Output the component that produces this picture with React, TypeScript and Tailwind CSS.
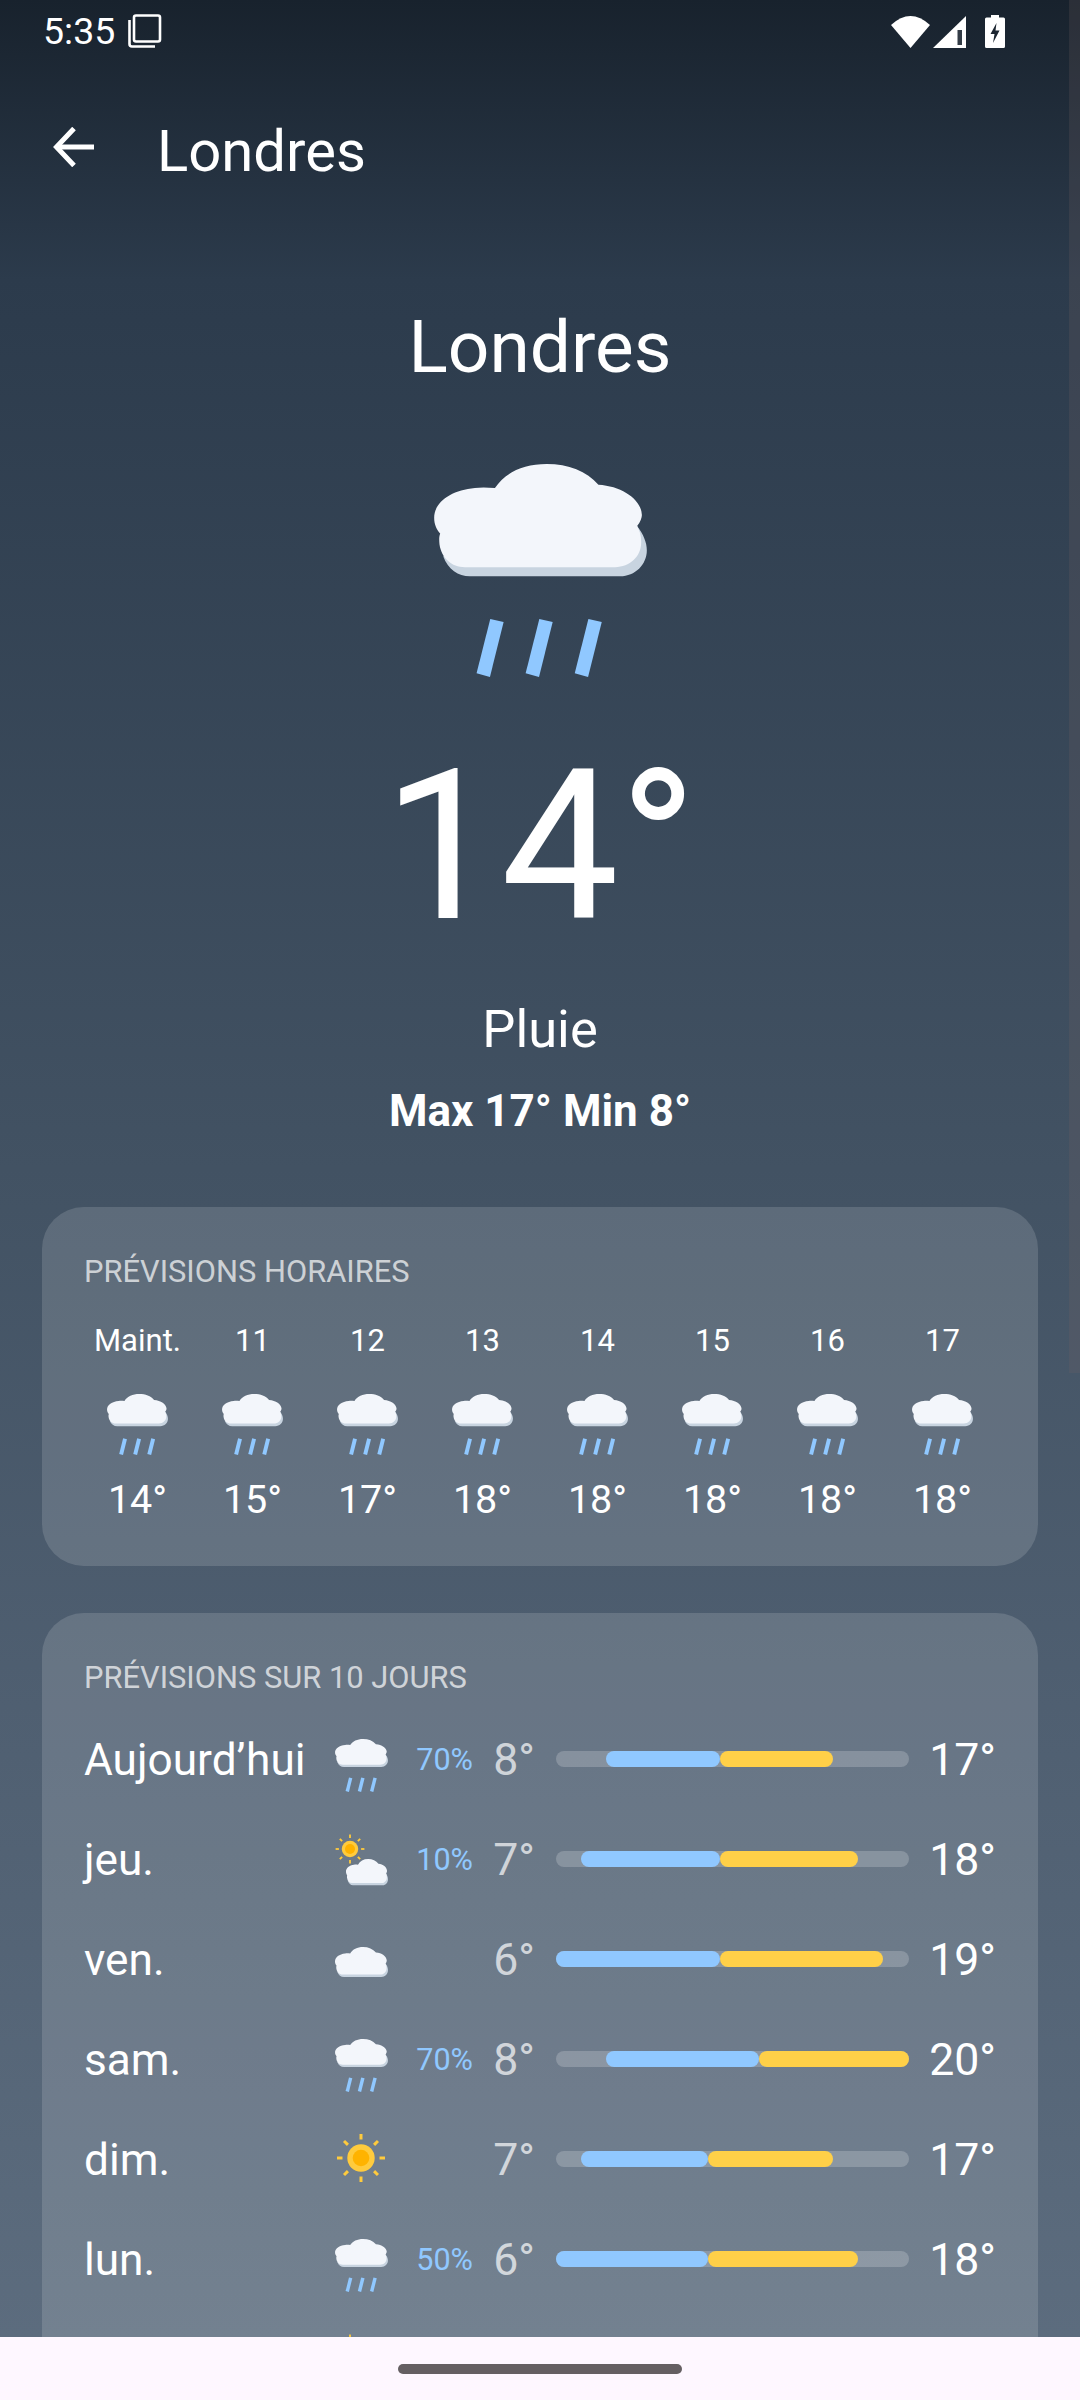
const days = [
  { day: "Aujourd’hui", icon: "rain", pct: "70%", low: "8°", high: "17°", start: 50, blue: 114, yellow: 113 },
  { day: "jeu.", icon: "partly", pct: "10%", low: "7°", high: "18°", start: 25, blue: 139, yellow: 138 },
  { day: "ven.", icon: "cloud", pct: "", low: "6°", high: "19°", start: 0, blue: 164, yellow: 163 },
  { day: "sam.", icon: "rain", pct: "70%", low: "8°", high: "20°", start: 50, blue: 153, yellow: 150 },
  { day: "dim.", icon: "sun", pct: "", low: "7°", high: "17°", start: 25, blue: 127, yellow: 125 },
  { day: "lun.", icon: "rain", pct: "50%", low: "6°", high: "18°", start: 0, blue: 152, yellow: 150 },
]

const hours = [
  { label: "Maint.", temp: "14°" },
  { label: "11", temp: "15°" },
  { label: "12", temp: "17°" },
  { label: "13", temp: "18°" },
  { label: "14", temp: "18°" },
  { label: "15", temp: "18°" },
  { label: "16", temp: "18°" },
  { label: "17", temp: "18°" },
]

/* ---------------- WEATHER ICONS ---------------- */

function CloudPaths() {
  return (
    <>
      <path
        d="M190 380 C205 420 235 440 270 440 H720 C765 440 800 405 800 362 C800 340 790 315 771 290 L600 340 Z"
        fill="#c8d4e0"
      />
      <path
        d="M255 413 H705 C750 413 785 380 783 335 C783 318 778 303 771 290 C782 275 786 262 785 255 C783 210 725 170 655 166 C620 125 565 104 500 104 C430 104 375 130 345 176 C320 174 300 174 285 176 C215 182 163 218 163 265 C163 285 170 300 181 312 C177 322 178 335 179 345 C185 385 215 413 255 413 Z"
        fill="#f3f6fb"
      />
    </>
  )
}

function RainIcon({ className }: { className: string }) {
  return (
    <svg viewBox="163 104 637 638" className={className}>
      <CloudPaths />
      <path d="M331 568 L371 577 L330 742 L290 731 Z" fill="#90c8ff" />
      <path d="M478 568 L518 577 L477 742 L437 731 Z" fill="#90c8ff" />
      <path d="M625 568 L665 577 L624 742 L584 731 Z" fill="#90c8ff" />
    </svg>
  )
}

function SunShape() {
  const rays = [0, 45, 90, 135, 180, 225, 270, 315]
  return (
    <>
      {rays.map((r) => (
        <line key={r} x1="0" y1="-18.5" x2="0" y2="-24" stroke="#ffcb3d" strokeWidth="3" transform={`rotate(${r})`} />
      ))}
      <circle r="13.7" fill="#ffcb3d" />
      <circle r="8.3" fill="#ffb300" />
    </>
  )
}

function DayIcon({ icon }: { icon: string }) {
  if (icon === "rain") return <RainIcon className="w-[53px] h-[53px] mt-[15px]" />
  if (icon === "cloud") {
    return (
      <svg viewBox="163 104 637 336" preserveAspectRatio="none" className="w-[53px] h-[30px] mt-[23px]">
        <CloudPaths />
      </svg>
    )
  }
  if (icon === "sun") {
    return (
      <svg viewBox="-25 -25 50 50" className="w-[50px] h-[50px] mt-[9px]">
        <SunShape />
      </svg>
    )
  }
  return (
    <svg viewBox="0 0 60 70" className="w-[60px] h-[70px]">
      <g transform="translate(19 25) scale(0.6)">
        <SunShape />
      </g>
      <g transform="translate(4.2 26.9) scale(0.066 0.078)">
        <CloudPaths />
      </g>
    </svg>
  )
}

/* ---------------- STATUS BAR ---------------- */

function StatusBar() {
  return (
    <div className="h-[63px] flex items-center pl-[43px] pr-[75px] text-white">
      <span className="text-[37.5px] leading-none">5:35</span>
      <svg viewBox="0 0 34 34" className="w-[34px] h-[34px] ml-[13px] mb-[1px]" fill="none" stroke="white" strokeWidth="2.6">
        <rect x="6" y="1.5" width="26" height="26" rx="2" />
        <path d="M1.5 6 V30 Q1.5 32.5 4 32.5 H27" />
      </svg>
      <div className="ml-auto flex items-center">
        <svg viewBox="0 0 39 32" className="w-[39px] h-[32px]">
          <path d="M0 9 Q19.5 -9 39 9 L19.5 32 Z" fill="white" />
        </svg>
        <svg viewBox="0 0 33 32" className="w-[33px] h-[32px] ml-[3px]">
          <path d="M33 0 V32 H0 Z" fill="white" />
          <rect x="24.5" y="14" width="4.5" height="15" fill="#333c46" />
        </svg>
        <svg viewBox="0 0 20 33" className="w-[20px] h-[33px] ml-[19px]">
          <path d="M6 0 H14 V2.5 H18.5 Q20 2.5 20 4 V31.5 Q20 33 18.5 33 H1.5 Q0 33 0 31.5 V4 Q0 2.5 1.5 2.5 H6 Z" fill="white" />
          <path d="M11.5 8 L5.5 19 H9.5 L8 28 L14.5 15.5 H10.5 Z" fill="#1b2530" />
        </svg>
      </div>
    </div>
  )
}

/* ---------------- FORECAST CARDS ---------------- */

function HourlyCard() {
  return (
    <section className="mx-[42px] h-[359px] rounded-[42px] bg-white/[.14] pt-[41px]">
      <h2 className="pl-[42px] text-[30.85px] leading-[48px] text-white/70">PRÉVISIONS HORAIRES</h2>
      <div className="flex pl-[38px] mt-[25px]">
        {hours.map((h, i) => (
          <div key={i} className="w-[115px] shrink-0 flex flex-col items-center text-white">
            <span className="text-[31px] leading-[40px]">{h.label}</span>
            <RainIcon className="w-[61px] h-[61px] mt-[33px]" />
            <span className="text-[39.5px] leading-[44px] mt-[23px]">{h.temp}</span>
          </div>
        ))}
      </div>
    </section>
  )
}

function DayRow({ d }: { d: (typeof days)[number] }) {
  return (
    <div className="h-[100px] flex items-center pl-[42px]">
      <span className="w-[247px] mt-[2px] text-[44.2px] leading-none text-white">{d.day}</span>
      <div className="w-[60px] h-[70px] flex justify-center items-start">
        <DayIcon icon={d.icon} />
      </div>
      <span className="w-[82px] mt-[2px] text-right text-[30.6px] leading-none text-[#90c8ff]">{d.pct}</span>
      <span className="w-[62px] mt-[2px] text-right text-[44.6px] leading-none text-white/70">{d.low}</span>
      <div className="ml-[21px] w-[353px] h-[16px] rounded-full bg-white/20 flex">
        <div className="shrink-0" style={{ width: d.start }} />
        <div className="h-full rounded-full bg-[#90c8ff]" style={{ width: d.blue }} />
        <div className="h-full rounded-full bg-[#ffd048]" style={{ width: d.yellow }} />
      </div>
      <span className="w-[87px] mt-[2px] text-right text-[44.6px] leading-none text-white">{d.high}</span>
    </div>
  )
}

function DailyCard() {
  return (
    <section className="mx-[42px] mt-[47px] rounded-t-[42px] bg-white/[.14] pt-[41px] pb-[60px]">
      <h2 className="pl-[42px] text-[30.85px] leading-[48px] text-white/70">PRÉVISIONS SUR 10 JOURS</h2>
      <div className="mt-[7px]">
        {days.map((d) => (
          <DayRow key={d.day} d={d} />
        ))}
        {/* next row is cut off by the nav bar, only the sun ray shows */}
        <div className="h-[100px] flex items-center pl-[289px]">
          <div className="w-[60px] h-[70px]">
            <DayIcon icon="partly" />
          </div>
        </div>
      </div>
    </section>
  )
}

export default function App() {
  return (
    <div className="relative w-[1080px] h-[2400px] flex flex-col overflow-hidden font-['Roboto',sans-serif]">
      <div className="flex-1 min-h-0 overflow-hidden bg-[linear-gradient(180deg,#18222d_0%,#2c3b4c_12%,#425263_50%,#4f5f71_73%,#5c6c7e_100%)]">
        <StatusBar />

        {/* APP BAR */}
        <div className="h-[170px] flex items-center pl-[53px] text-white">
          <svg viewBox="0 0 41 40" className="w-[41px] h-[40px] mb-[2px]" fill="none" stroke="white" strokeWidth="5">
            <path d="M41 20 H4" />
            <path d="M21 1.5 L3.5 20 L21 38.5" />
          </svg>
          <span className="ml-[63px] mt-[5px] text-[58px] leading-none">Londres</span>
        </div>

        {/* HERO */}
        <div className="flex flex-col items-center text-white">
          <h1 className="mt-[64px] text-[73px] leading-[100px]">Londres</h1>
          <RainIcon className="w-[213px] h-[213px] mt-[67px]" />
          <div className="mt-[62px] text-[210px] leading-[215px]">14°</div>
          <div className="mt-[45px] text-[52.5px] leading-[60px]">Pluie</div>
          <div className="mt-[22px] text-[44px] leading-[60px] font-bold">Max 17° Min 8°</div>
        </div>

        <div className="mt-[66px]">
          <HourlyCard />
          <DailyCard />
        </div>
      </div>

      {/* NAV BAR */}
      <div className="h-[63px] shrink-0 bg-[#fef7ff] flex justify-center pt-[27px]">
        <div className="w-[284px] h-[10px] rounded-full bg-[#655f62]" />
      </div>

      {/* SCROLLBAR */}
      <div className="absolute top-0 right-0 w-[11px] h-[1373px] bg-[#7a6464]/20" />
    </div>
  )
}
